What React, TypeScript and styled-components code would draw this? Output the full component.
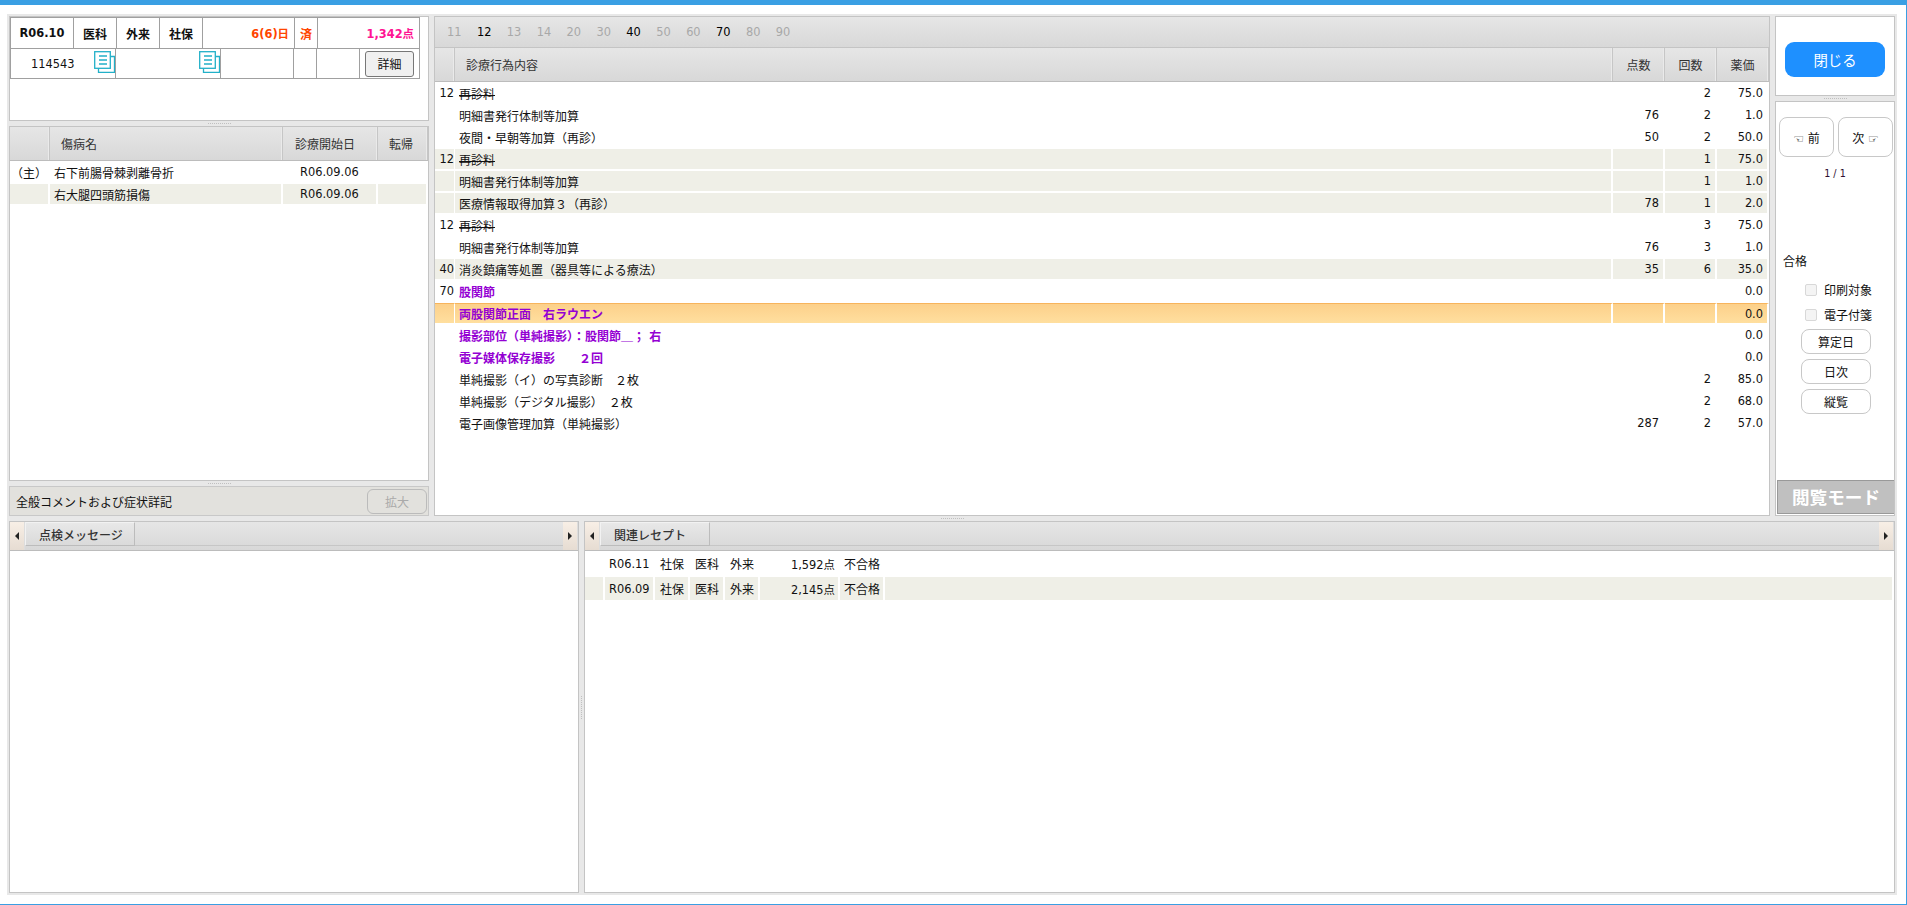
import React from "react";
import styled, { createGlobalStyle } from "styled-components";

const CJK = `"DejaVu Sans", "Noto Sans CJK JP", sans-serif`;
const HEAD_BG = "linear-gradient(#e6e6e6, #d8d8d8)";

const Global = createGlobalStyle`
  html, body { margin: 0; padding: 0; background: #fff; }
  * { box-sizing: border-box; }
  body { font-family: ${CJK}; font-size: 12px; color: #111; }
`;

const Page = styled.div`
  width: 1907px;
  height: 905px;
  overflow: hidden;
  border-top: 5px solid #3a9fe3;
  border-right: 1px solid #3a9fe3;
  border-bottom: 1px solid #3a9fe3;
  padding: 9px 9px 8px 7px;
`;
const Workspace = styled.div`
  height: 881px;
  background: #e8e8e8;
  padding: 2px;
  display: flex;
  flex-direction: column;
`;
const TopArea = styled.div`
  display: flex;
  height: 500px;
`;
const BottomArea = styled.div`
  display: flex;
  height: 372px;
`;
const Column = styled.div<{ $w: number }>`
  width: ${(p) => p.$w}px;
  display: flex;
  flex-direction: column;
  flex: none;
`;
const HSplit = styled.div`
  height: 5px;
  flex: none;
  display: flex;
  align-items: center;
  justify-content: center;
  &::after {
    content: "";
    width: 23px;
    border-top: 1px dotted #c0c0c0;
  }
`;
const VSplit = styled.div<{ $grip?: boolean }>`
  width: 5px;
  flex: none;
  display: flex;
  align-items: center;
  justify-content: center;
  &::after {
    content: "";
    height: ${(p) => (p.$grip ? "23px" : "0")};
    border-left: ${(p) => (p.$grip ? "1px dotted #c0c0c0" : "0")};
  }
`;
const Panel = styled.div<{ $h?: number }>`
  background: #fff;
  border: 1px solid #c4c4c4;
  display: flex;
  flex-direction: column;
  ${(p) => (p.$h ? `height: ${p.$h}px; flex: none;` : "flex: 1; min-height: 0;")}
`;

/* receipt summary */
const InfoTable = styled.div`
  width: 410px;
  border-left: 1px solid #a0a0a0;
  border-top: 1px solid #a0a0a0;
`;
const InfoRow = styled.div<{ $cols: string; $h: number }>`
  display: grid;
  grid-template-columns: ${(p) => p.$cols};
  height: ${(p) => p.$h}px;
  border-bottom: 1px solid #a0a0a0;
`;
const InfoCell = styled.div<{ $align?: string; $color?: string; $bold?: boolean; $num?: boolean }>`
  display: flex;
  align-items: center;
  justify-content: ${(p) => p.$align || "center"};
  border-right: 1px solid #a0a0a0;
  color: ${(p) => p.$color || "#111"};
  font-weight: ${(p) => (p.$bold ? 700 : 400)};
  font-size: ${(p) => (p.$num ? "11.4px" : "12px")};
  padding: 0 5px;
  position: relative;
`;
const DocIcon = styled.svg`
  position: absolute;
  right: 0;
  top: 2px;
  width: 21px;
  height: 22px;
`;
const DetailButton = styled.button`
  width: 57px;
  height: 26px;
  background: #f0f0f0;
  border: 1px solid #777;
  border-radius: 3px;
  font: 12px ${CJK};
  color: #111;
  padding: 0;
`;
const Doc = () => (
  <DocIcon viewBox="0 0 21 22" fill="none" stroke="#22b0c8" strokeWidth="1.3">
    <path d="M16.5 5.5h4v16h-16v-4.5" />
    <rect x="0.7" y="0.7" width="15.6" height="16.6" fill="#fff" />
    <path d="M5 5h8M5 9h8M5 13h8" />
  </DocIcon>
);

/* generic grid header / row */
const HeadRow = styled.div<{ $cols: string }>`
  display: grid;
  grid-template-columns: ${(p) => p.$cols};
  height: 34px;
  flex: none;
  background: ${HEAD_BG};
  border-bottom: 1px solid #bcbcbc;
`;
const HeadCell = styled.div<{ $pad?: number; $center?: boolean; $last?: boolean }>`
  display: flex;
  align-items: center;
  justify-content: ${(p) => (p.$center ? "center" : "flex-start")};
  padding-left: ${(p) => p.$pad || 0}px;
  color: #333;
  border-right: 1px solid #c6c6c6;
  box-shadow: inset -1px 0 0 #eaeaea;
`;
const List = styled.div`
  padding-top: 1px;
  flex: 1;
`;
const Row = styled.div<{ $cols: string; $h?: number; $gap?: number }>`
  display: grid;
  grid-template-columns: ${(p) => p.$cols};
  height: ${(p) => p.$h || 20}px;
  margin-bottom: ${(p) => p.$gap ?? 2}px;
`;
type Tone = "plain" | "stripe" | "select";
const toneBg = (t?: Tone) =>
  t === "stripe"
    ? "#efefe7"
    : t === "select"
      ? "linear-gradient(#fcd08a, #ffdf9f)"
      : "transparent";
const Cell = styled.div<{
  $tone?: Tone;
  $pad?: number;
  $right?: boolean;
  $center?: boolean;
  $num?: boolean;
  $hair?: boolean;
  $accent?: boolean;
  $struck?: boolean;
}>`
  display: flex;
  align-items: center;
  justify-content: ${(p) => (p.$right ? "flex-end" : p.$center ? "center" : "flex-start")};
  background: ${(p) => toneBg(p.$tone)};
  border-right: ${(p) => (p.$hair ? 1 : 2)}px solid #fff;
  ${(p) => (p.$right ? `padding-right: ${p.$pad ?? 4}px;` : `padding-left: ${p.$pad ?? 0}px;`)}
  font-size: ${(p) => (p.$num ? "11.4px" : "12px")};
  white-space: pre;
  ${(p) => (p.$accent ? "color: #9400d3; font-weight: 700;" : "")}
  ${(p) => (p.$struck ? "text-decoration: line-through;" : "")}
  ${(p) => (p.$tone === "select" ? "border-top: 1px solid #f7b45c;" : "")}
`;

/* comment bar */
const CommentBar = styled.div`
  height: 30px;
  flex: none;
  background: #e2e1dd;
  border: 1px solid #c8c8c8;
  display: flex;
  align-items: center;
  justify-content: space-between;
  padding: 0 1px 0 6px;
`;
const GhostButton = styled.button`
  width: 60px;
  height: 25px;
  background: transparent;
  border: 1px solid #bbb;
  border-radius: 6px;
  color: #aaa;
  font: 12px ${CJK};
  padding: 0;
`;

/* category tabs */
const CategoryBand = styled.div`
  height: 31px;
  flex: none;
  display: flex;
  align-items: center;
  padding-left: 12px;
  background: linear-gradient(#e6e6e6, #d8d8d8);
  border-bottom: 1px solid #c4c4c4;
`;
const Category = styled.span<{ $on?: boolean }>`
  width: 29.9px;
  flex: none;
  font-size: 11.4px;
  color: ${(p) => (p.$on ? "#000" : "#a8a8a8")};
`;

/* side panel */
const CloseBox = styled.div`
  flex: 1;
  display: flex;
  align-items: center;
  justify-content: center;
  padding-top: 6px;
`;
const CloseButton = styled.button`
  width: 100px;
  height: 35px;
  background: #1e90ff;
  color: #fff;
  border: 0;
  border-radius: 9px;
  font: 14.4px ${CJK};
  padding: 0;
`;
const NavRow = styled.div`
  display: flex;
  gap: 4px;
  padding: 15px 0 0 3px;
`;
const NavButton = styled.button`
  width: 55px;
  height: 40px;
  background: #fff;
  border: 1px solid #c8c8c8;
  border-radius: 8px;
  font: 12px ${CJK};
  color: #111;
  padding: 0;
`;
const PageCount = styled.div`
  text-align: center;
  font-size: 9.6px;
  color: #301030;
  margin-top: 10px;
  line-height: 13px;
`;
const Verdict = styled.div`
  margin: 73px 0 0 7px;
  line-height: 18px;
`;
const CheckRow = styled.label`
  display: flex;
  align-items: center;
  height: 25px;
  padding-left: 29px;
  gap: 7px;
`;
const CheckRowFirst = styled(CheckRow)`
  margin-top: 6px;
`;
const Box = styled.span`
  width: 12px;
  height: 12px;
  background: #f4f4f4;
  border: 1px solid #d8d8d8;
  border-radius: 2px;
  flex: none;
`;
const ToolStack = styled.div`
  display: flex;
  flex-direction: column;
  gap: 5px;
  padding-left: 25px;
  margin-top: 2px;
`;
const ToolButton = styled.button`
  width: 70px;
  height: 25px;
  background: #fff;
  border: 1px solid #c8c8c8;
  border-radius: 8px;
  font: 12px ${CJK};
  color: #111;
  padding: 0;
`;
const ModeBar = styled.div`
  margin: auto 0 1px 1px;
  height: 34px;
  background: #c0c0c0;
  border: 1px solid #999;
  border-right: 0;
  color: #fff;
  font-size: 17.6px;
  font-weight: 700;
  display: flex;
  align-items: center;
  justify-content: center;
  padding-bottom: 2px;
`;

/* bottom tabs */
const TabBand = styled.div`
  height: 29px;
  flex: none;
  display: flex;
  background: linear-gradient(#e6e6e6, #d8d8d8);
  border-bottom: 1px solid #bcbcbc;
`;
const Arrow = styled.div<{ $dir: "l" | "r" }>`
  width: 15px;
  flex: none;
  background: linear-gradient(#f8efe6, #e6dcd2);
  display: flex;
  align-items: center;
  justify-content: center;
  border-right: 1px solid #ddd;
  &::after {
    content: "";
    border-top: 4px solid transparent;
    border-bottom: 4px solid transparent;
    ${(p) => (p.$dir === "l" ? "border-right: 4px solid #222;" : "border-left: 4px solid #222;")}
  }
`;
const Tab = styled.div`
  width: 110px;
  height: 24px;
  flex: none;
  display: flex;
  align-items: center;
  padding-left: 13px;
  color: #333;
  font-weight: 500;
  background: linear-gradient(#e8e8e8, #dadada);
  border-left: 1px solid #f2f2f2;
  border-top: 1px solid #f2f2f2;
  border-right: 1px solid #bcbcbc;
  border-bottom: 1px solid #bcbcbc;
`;
const Fill = styled.div`
  flex: 1;
  height: 24px;
  border-bottom: 1px solid #c6c6c6;
`;

const INFO_A = "63px 43px 43px 43px 92px 23px 102px";
const INFO_B = "105px 105px 73px 23px 43px 60px";
const DIAG = "40px 233px 95px 50px";
const ACT = "20px 1158px 52px 52px 52px";
const REL = "20px 50px 35px 35px 35px 80px 45px 1fr";

const CATS: [string, boolean][] = [
  ["11", false], ["12", true], ["13", false], ["14", false], ["20", false], ["30", false],
  ["40", true], ["50", false], ["60", false], ["70", true], ["80", false], ["90", false],
];

type Act = { code?: string; name: string; pts?: string; cnt?: string; price: string; tone?: Tone; accent?: boolean; struck?: boolean };
const ACTS: Act[] = [
  { code: "12", name: "再診料", cnt: "2", price: "75.0", struck: true },
  { name: "明細書発行体制等加算", pts: "76", cnt: "2", price: "1.0" },
  { name: "夜間・早朝等加算（再診）", pts: "50", cnt: "2", price: "50.0" },
  { code: "12", name: "再診料", cnt: "1", price: "75.0", tone: "stripe", struck: true },
  { name: "明細書発行体制等加算", cnt: "1", price: "1.0", tone: "stripe" },
  { name: "医療情報取得加算３（再診）", pts: "78", cnt: "1", price: "2.0", tone: "stripe" },
  { code: "12", name: "再診料", cnt: "3", price: "75.0", struck: true },
  { name: "明細書発行体制等加算", pts: "76", cnt: "3", price: "1.0" },
  { code: "40", name: "消炎鎮痛等処置（器具等による療法）", pts: "35", cnt: "6", price: "35.0", tone: "stripe" },
  { code: "70", name: "股関節", price: "0.0", accent: true },
  { name: "両股関節正面　右ラウエン", price: "0.0", tone: "select", accent: true },
  { name: "撮影部位（単純撮影）：股関節＿； 右", price: "0.0", accent: true },
  { name: "電子媒体保存撮影　　２回", price: "0.0", accent: true },
  { name: "単純撮影（イ）の写真診断　２枚", cnt: "2", price: "85.0" },
  { name: "単純撮影（デジタル撮影）　２枚", cnt: "2", price: "68.0" },
  { name: "電子画像管理加算（単純撮影）", pts: "287", cnt: "2", price: "57.0" },
];

const RELATED = [
  { ym: "R06.11", pts: "1,592点", tone: "plain" as Tone },
  { ym: "R06.09", pts: "2,145点", tone: "stripe" as Tone },
];

export default function App() {
  return (
    <Page>
      <Global />
      <Workspace>
        <TopArea>
          <Column $w={420}>
            <Panel $h={105}>
              <InfoTable>
                <InfoRow $cols={INFO_A} $h={31}>
                  <InfoCell $bold $num>R06.10</InfoCell>
                  <InfoCell $bold>医科</InfoCell>
                  <InfoCell $bold>外来</InfoCell>
                  <InfoCell $bold>社保</InfoCell>
                  <InfoCell $bold $num $align="flex-end" $color="#ff4500">6(6)日</InfoCell>
                  <InfoCell $bold $color="#ff4500">済</InfoCell>
                  <InfoCell $bold $num $align="flex-end" $color="#ff1493">1,342点</InfoCell>
                </InfoRow>
                <InfoRow $cols={INFO_B} $h={30}>
                  <InfoCell $num $align="flex-start">
                    <span style={{ marginLeft: 15 }}>114543</span>
                    <Doc />
                  </InfoCell>
                  <InfoCell><Doc /></InfoCell>
                  <InfoCell />
                  <InfoCell />
                  <InfoCell />
                  <InfoCell><DetailButton>詳細</DetailButton></InfoCell>
                </InfoRow>
              </InfoTable>
            </Panel>
            <HSplit />
            <Panel>
              <HeadRow $cols={DIAG}>
                <HeadCell />
                <HeadCell $pad={11}>傷病名</HeadCell>
                <HeadCell $pad={12}>診療開始日</HeadCell>
                <HeadCell $pad={11}>転帰</HeadCell>
              </HeadRow>
              <List>
                <Row $cols={DIAG}>
                  <Cell $center>（主）</Cell>
                  <Cell $pad={4}>右下前腸骨棘剥離骨折</Cell>
                  <Cell $pad={17} $num>R06.09.06</Cell>
                  <Cell />
                </Row>
                <Row $cols={DIAG}>
                  <Cell $tone="stripe" />
                  <Cell $tone="stripe" $pad={4}>右大腿四頭筋損傷</Cell>
                  <Cell $tone="stripe" $pad={17} $num>R06.09.06</Cell>
                  <Cell $tone="stripe" />
                </Row>
              </List>
            </Panel>
            <HSplit />
            <CommentBar>
              全般コメントおよび症状詳記
              <GhostButton>拡大</GhostButton>
            </CommentBar>
          </Column>
          <VSplit />
          <Column $w={1336}>
            <Panel>
              <CategoryBand>
                {CATS.map(([c, on]) => (
                  <Category key={c} $on={on}>{c}</Category>
                ))}
              </CategoryBand>
              <HeadRow $cols={ACT}>
                <HeadCell />
                <HeadCell $pad={11}>診療行為内容</HeadCell>
                <HeadCell $center>点数</HeadCell>
                <HeadCell $center>回数</HeadCell>
                <HeadCell $center>薬価</HeadCell>
              </HeadRow>
              <List>
                {ACTS.map((a, i) => (
                  <Row key={i} $cols={ACT}>
                    <Cell $tone={a.tone} $hair $right $pad={0} $num>{a.code}</Cell>
                    <Cell $tone={a.tone} $pad={4} $accent={a.accent}>
                      {a.struck ? <s>{a.name}</s> : a.name}
                    </Cell>
                    <Cell $tone={a.tone} $right $num>{a.pts}</Cell>
                    <Cell $tone={a.tone} $right $num>{a.cnt}</Cell>
                    <Cell $tone={a.tone} $right $num>{a.price}</Cell>
                  </Row>
                ))}
              </List>
            </Panel>
          </Column>
          <VSplit />
          <Column $w={120}>
            <Panel $h={80}>
              <CloseBox>
                <CloseButton>閉じる</CloseButton>
              </CloseBox>
            </Panel>
            <HSplit />
            <Panel>
              <NavRow>
                <NavButton>☜ 前</NavButton>
                <NavButton>次 ☞</NavButton>
              </NavRow>
              <PageCount>1 / 1</PageCount>
              <Verdict>合格</Verdict>
              <CheckRowFirst><Box />印刷対象</CheckRowFirst>
              <CheckRow><Box />電子付箋</CheckRow>
              <ToolStack>
                <ToolButton>算定日</ToolButton>
                <ToolButton>日次</ToolButton>
                <ToolButton>縦覧</ToolButton>
              </ToolStack>
              <ModeBar>閲覧モード</ModeBar>
            </Panel>
          </Column>
        </TopArea>
        <HSplit />
        <BottomArea>
          <Column $w={570}>
            <Panel>
              <TabBand>
                <Arrow $dir="l" />
                <Tab>点検メッセージ</Tab>
                <Fill />
                <Arrow $dir="r" />
              </TabBand>
            </Panel>
          </Column>
          <VSplit $grip />
          <Column $w={1311}>
            <Panel>
              <TabBand>
                <Arrow $dir="l" />
                <Tab>関連レセプト</Tab>
                <Fill />
                <Arrow $dir="r" />
              </TabBand>
              <List>
                {RELATED.map((r) => (
                  <Row key={r.ym} $cols={REL} $h={23}>
                    <Cell $tone={r.tone} />
                    <Cell $tone={r.tone} $pad={4} $num>{r.ym}</Cell>
                    <Cell $tone={r.tone} $pad={5}>社保</Cell>
                    <Cell $tone={r.tone} $pad={5}>医科</Cell>
                    <Cell $tone={r.tone} $pad={5}>外来</Cell>
                    <Cell $tone={r.tone} $right $pad={3} $num>{r.pts}</Cell>
                    <Cell $tone={r.tone} $pad={4}>不合格</Cell>
                    <Cell $tone={r.tone} />
                  </Row>
                ))}
              </List>
            </Panel>
          </Column>
        </BottomArea>
      </Workspace>
    </Page>
  );
}
